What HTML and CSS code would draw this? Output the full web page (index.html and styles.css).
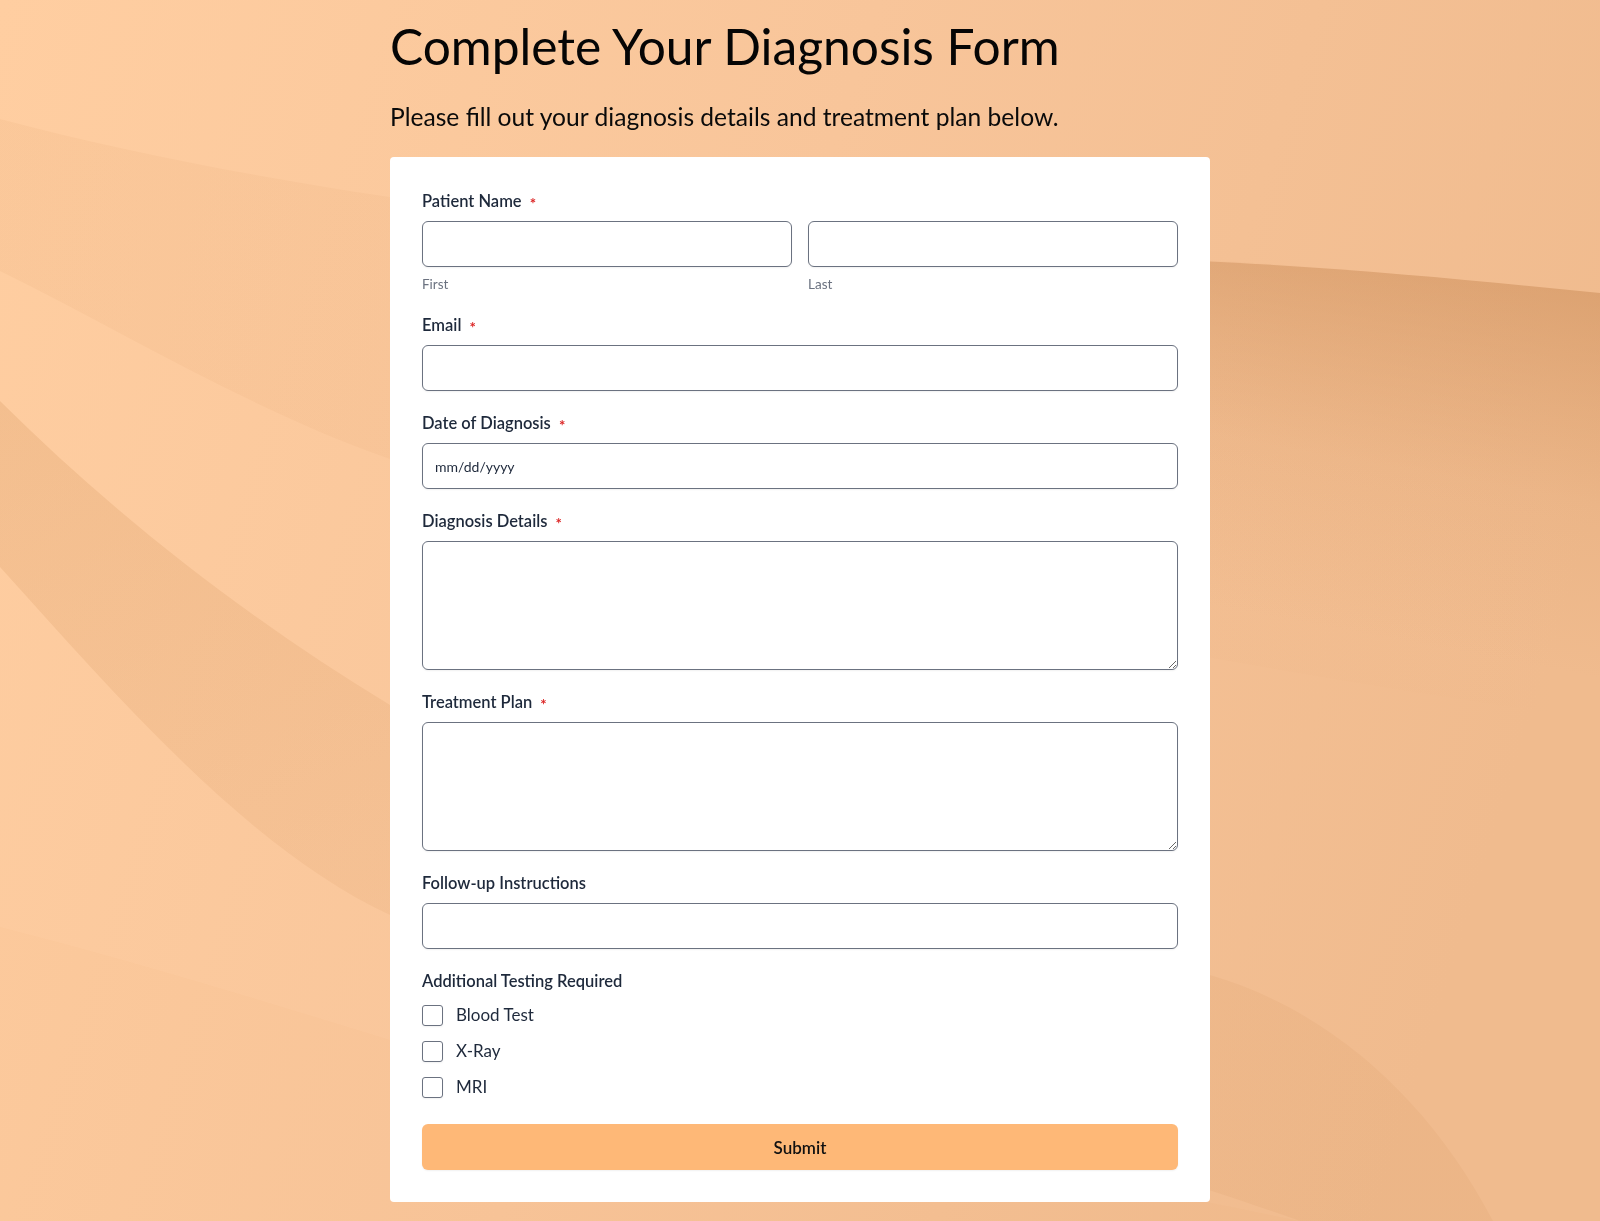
FILE: index.html
```html
<!DOCTYPE html>
<html lang="en">
<head>
<meta charset="utf-8">
<title>Complete Your Diagnosis Form</title>
<link rel="stylesheet" href="styles.css">
</head>
<body>
<svg class="bg" viewBox="0 0 1600 1221" preserveAspectRatio="none" aria-hidden="true">
  <defs>
    <linearGradient id="base" x1="0" y1="0" x2="1600" y2="500" gradientUnits="userSpaceOnUse">
      <stop offset="0" stop-color="#ffcea1"/>
      <stop offset="0.5" stop-color="#f8c59a"/>
      <stop offset="1" stop-color="#f0bb8e"/>
    </linearGradient>
    <linearGradient id="b1" x1="0" y1="0" x2="1600" y2="0" gradientUnits="userSpaceOnUse">
      <stop offset="0" stop-color="#b96a2a" stop-opacity="0.055"/>
      <stop offset="0.4" stop-color="#b96a2a" stop-opacity="0.04"/>
      <stop offset="1" stop-color="#b96a2a" stop-opacity="0"/>
    </linearGradient>
    <linearGradient id="b1r" x1="1450" y1="265" x2="1380" y2="640" gradientUnits="userSpaceOnUse">
      <stop offset="0" stop-color="#c98a55" stop-opacity="0.5"/>
      <stop offset="0.55" stop-color="#c98a55" stop-opacity="0.12"/>
      <stop offset="1" stop-color="#c98a55" stop-opacity="0"/>
    </linearGradient>
    <linearGradient id="b2" x1="0" y1="400" x2="200" y2="1000" gradientUnits="userSpaceOnUse">
      <stop offset="0" stop-color="#c07a3c" stop-opacity="0.17"/>
      <stop offset="1" stop-color="#c07a3c" stop-opacity="0.08"/>
    </linearGradient>
  </defs>
  <rect x="0" y="0" width="1600" height="1221" fill="url(#base)"/>
  <path d="M0,119 C250,185 600,238 1000,250 C1250,258 1450,278 1600,293 L1600,720 C1100,650 600,540 390,459 C250,410 120,330 0,271 Z" fill="url(#b1)"/>
  <path d="M1100,257 C1300,263 1450,278 1600,293 L1600,800 L1100,800 Z" fill="url(#b1r)"/>
  <path d="M0,401 C120,520 250,620 390,705 C650,840 950,920 1210,975 C1330,1010 1430,1100 1493,1221 L1300,1221 C1100,1150 700,1040 390,915 C250,850 120,700 0,567 Z" fill="url(#b2)"/>
  <path d="M0,927 C130,960 260,1000 390,1040 C700,1100 1000,1160 1300,1221 L0,1221 Z" fill="#c07a3c" fill-opacity="0.025"/>
</svg>

<main class="page">
  <h1 class="title">Complete Your Diagnosis Form</h1>
  <p class="subtitle">Please fill out your diagnosis details and treatment plan below.</p>

  <form class="card">
    <div class="field">
      <div class="label">Patient Name <span class="req">*</span></div>
      <div class="name-row">
        <div class="name-col">
          <input class="input" type="text" aria-label="First">
          <div class="sublabel">First</div>
        </div>
        <div class="name-col">
          <input class="input" type="text" aria-label="Last">
          <div class="sublabel">Last</div>
        </div>
      </div>
    </div>

    <div class="field">
      <label class="label">Email <span class="req">*</span></label>
      <input class="input" type="text">
    </div>

    <div class="field">
      <label class="label">Date of Diagnosis <span class="req">*</span></label>
      <input class="input date" type="text" placeholder="mm/dd/yyyy">
    </div>

    <div class="field">
      <label class="label">Diagnosis Details <span class="req">*</span></label>
      <textarea class="input area"></textarea>
    </div>

    <div class="field">
      <label class="label">Treatment Plan <span class="req">*</span></label>
      <textarea class="input area"></textarea>
    </div>

    <div class="field">
      <label class="label">Follow-up Instructions</label>
      <input class="input" type="text">
    </div>

    <div class="field">
      <div class="label">Additional Testing Required</div>
      <div class="checks">
        <label class="check"><input type="checkbox" class="box"><span>Blood Test</span></label>
        <label class="check"><input type="checkbox" class="box"><span>X-Ray</span></label>
        <label class="check"><input type="checkbox" class="box"><span>MRI</span></label>
      </div>
    </div>

    <button class="submit" type="button">Submit</button>
  </form>
</main>
</body>
</html>
```

FILE: styles.css
```css
* {
  box-sizing: border-box;
}

html, body {
  margin: 0;
  padding: 0;
}

body {
  font-family: Lato, "Noto Sans", "Liberation Sans", sans-serif;
  color: #1e293b;
  min-height: 1221px;
}

.bg {
  position: fixed;
  left: 0;
  top: 0;
  width: 100%;
  height: 100%;
  z-index: -1;
  display: block;
}

.page {
  width: 820px;
  margin: 0 auto;
  padding-top: 18px;
  padding-bottom: 18px;
}

.title {
  margin: 0;
  font-size: 49.7px;
  line-height: 56px;
  font-weight: 400;
  color: #050505;
  white-space: nowrap;
}

.subtitle {
  margin: 27px 0 0;
  font-size: 24.6px;
  line-height: 32px;
  font-weight: 400;
  color: #0a0a0a;
  white-space: nowrap;
}

.card {
  margin-top: 24px;
  background: #ffffff;
  border-radius: 4px;
  padding: 32px;
  display: flex;
  flex-direction: column;
  gap: 20px;
}

.field {
  display: flex;
  flex-direction: column;
}

.label {
  display: block;
  font-size: 16.5px;
  line-height: 24px;
  height: 24px;
  font-weight: 600;
  color: #1e293b;
  margin-bottom: 8px;
  white-space: nowrap;
}

.req {
  color: #dc2626;
  font-size: 15px;
  line-height: 1;
  font-weight: 700;
  margin-left: 4px;
  position: relative;
  top: 1.5px;
}

.name-row {
  display: grid;
  grid-template-columns: 1fr 1fr;
  gap: 16px;
}

.name-col {
  display: flex;
  flex-direction: column;
}

.sublabel {
  margin-top: 8px;
  font-size: 13.5px;
  line-height: 18px;
  height: 18px;
  color: #6b7280;
}

.input {
  display: block;
  width: 100%;
  height: 46px;
  border: 1px solid #6b7280;
  border-radius: 6px;
  background: #ffffff;
  box-shadow: 0 1px 2px rgba(0, 0, 0, 0.06);
  padding: 0 12px;
  font-family: inherit;
  font-size: 14px;
  color: #1e293b;
  outline: none;
}

.date::placeholder {
  color: #1e293b;
  opacity: 1;
}

.area {
  height: 129px;
  padding: 10px 12px;
  resize: vertical;
}

.checks {
  margin-top: 2px;
  display: flex;
  flex-direction: column;
  gap: 12px;
}

.check {
  display: flex;
  align-items: center;
  height: 24px;
  font-size: 17px;
  line-height: 24px;
  color: #1e293b;
}

.box {
  appearance: none;
  -webkit-appearance: none;
  margin: 0 13px 0 0;
  width: 21px;
  height: 21px;
  flex: none;
  border: 1px solid #6b7280;
  border-radius: 3px;
  background: #ffffff;
  box-shadow: 0 1px 2px rgba(0, 0, 0, 0.06);
}

.submit {
  margin-top: 5px;
  height: 46px;
  border: none;
  border-radius: 6px;
  background: #feb877;
  box-shadow: 0 1px 2px rgba(0, 0, 0, 0.06);
  font-family: inherit;
  font-size: 17px;
  font-weight: 600;
  color: #111111;
}
```
